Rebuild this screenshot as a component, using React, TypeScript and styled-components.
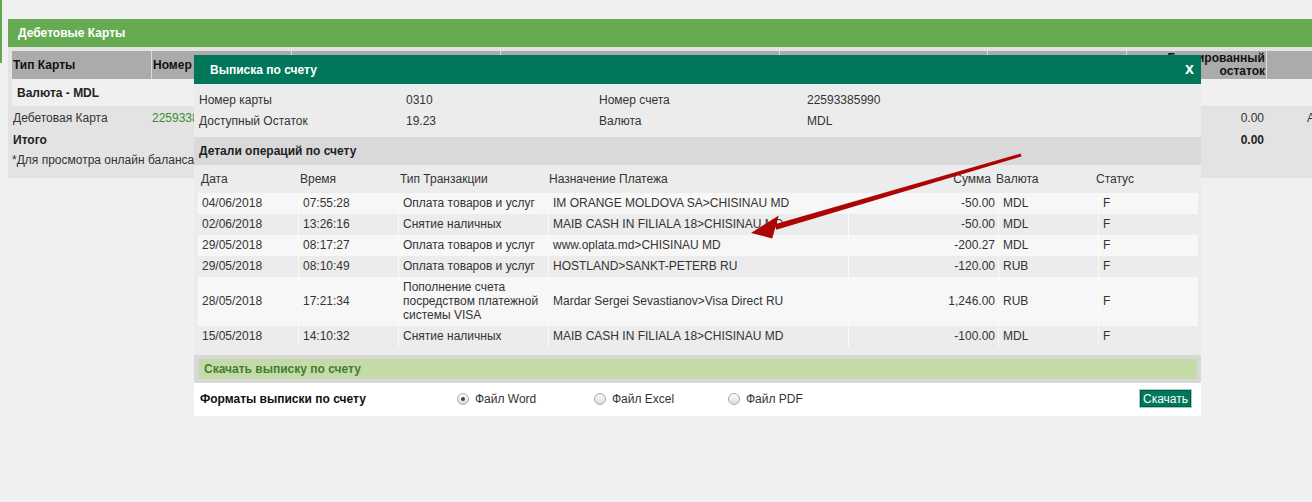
import React from "react";
import styled, { createGlobalStyle } from "styled-components";

const GlobalStyle = createGlobalStyle`
  html, body { margin: 0; padding: 0; background: #f0f0f0; }
  body {
    font-family: "Liberation Sans", Arial, sans-serif;
    font-size: 12px;
    color: #333;
  }
  * { box-sizing: border-box; }
`;

const Page = styled.div`
  position: relative;
  width: 1312px;
  height: 502px;
  overflow: hidden;
  display: flex;
  align-items: flex-start;
  background: #f0f0f0;
`;

const LeftStrip = styled.div`
  width: 2px;
  height: 63px;
  flex-shrink: 0;
  background: #63a950;
`;

const Main = styled.div`
  padding: 19px 0 0 6px;
  flex: 1;
  min-width: 0;
`;

const Panel = styled.section`
  width: 1370px;
`;

const PanelHeader = styled.div`
  height: 28px;
  background: #66aa52;
  color: #fff;
  font-weight: bold;
  line-height: 28px;
  padding-left: 10px;
`;

const PanelBody = styled.div`
  background: #e3e3e3;
  padding: 4px 0 10px 4px;
`;

const BgGrid = styled.div`
  display: grid;
  grid-template-columns: 139px 140px 209px 279px 208px 139px 140px 100px;
`;

const BgHead = styled.div<{ $right?: boolean }>`
  background: #ababab;
  height: 28px;
  display: flex;
  align-items: center;
  justify-content: ${(p) => (p.$right ? "flex-end" : "flex-start")};
  text-align: ${(p) => (p.$right ? "right" : "left")};
  padding: 0 1px;
  font-weight: bold;
  color: #111;
  line-height: 13px;
  & + & { border-left: 1px solid #dcdcdc; }
`;

const CurrencyRow = styled.div`
  grid-column: 1 / -1;
  height: 27px;
  line-height: 27px;
  padding-top: 1px;
  background: #f0f0f0;
  padding-left: 5px;
  font-weight: bold;
  color: #222;
`;

const BgCell = styled.div<{ $right?: boolean; $bold?: boolean; $green?: boolean; $pad?: number }>`
  height: ${(p) => (p.$bold ? "23px" : "22px")};
  line-height: ${(p) => (p.$bold ? "24px" : "22px")};
  padding: ${(p) => (p.$bold ? "0" : "1px")} ${(p) => (p.$right ? "2px" : "0")} 0 ${(p) => p.$pad ?? 1}px;
  text-align: ${(p) => (p.$right ? "right" : "left")};
  font-weight: ${(p) => (p.$bold ? "bold" : "normal")};
  color: ${(p) => (p.$green ? "#3d8a34" : p.$bold ? "#222" : "#333")};
  white-space: nowrap;
  overflow: hidden;
`;

const NoteRow = styled.div`
  grid-column: 1 / -1;
  height: 17px;
  line-height: 17px;
  padding-top: 1px;
  color: #333;
`;

/* ---------- Modal ---------- */

const Modal = styled.div`
  position: absolute;
  left: 194px;
  top: 55px;
  width: 1007px;
  background: #ececec;
`;

const ModalHeader = styled.div`
  height: 29px;
  background: #00765a;
  display: flex;
  align-items: center;
  justify-content: space-between;
  padding: 0 7px 0 16px;
  color: #fff;
  font-weight: bold;
`;

const Close = styled.span`
  font-size: 16px;
  font-weight: bold;
  line-height: 16px;
  margin-top: -1px;
`;

const InfoGrid = styled.div`
  display: grid;
  grid-template-columns: 207px 193px 208px 1fr;
  grid-auto-rows: 21px;
  align-items: center;
  padding: 5px 0 6px 5px;
  color: #333;
`;

const SectionTitle = styled.div`
  height: 28px;
  line-height: 28px;
  background: #d9d9d9;
  padding-left: 5px;
  font-weight: bold;
  color: #222;
`;

const OpsTable = styled.div`
  width: 1000px;
  margin-left: 4px;
  display: grid;
  grid-template-columns: 100px 100px 150px 300px 150px 100px 100px;
`;

const OpsHead = styled.div<{ $right?: boolean; $padR?: number; $shift?: number }>`
  height: 28px;
  line-height: 28px;
  padding: 0 ${(p) => p.$padR ?? 0}px 0 3px;
  text-indent: ${(p) => p.$shift ?? 0}px;
  text-align: ${(p) => (p.$right ? "right" : "left")};
  color: #333;
  white-space: nowrap;
`;

const OpsCell = styled.div<{ $alt?: boolean; $right?: boolean; $first?: boolean }>`
  background: ${(p) => (p.$alt ? "#ececec" : "#f7f7f7")};
  border-left: ${(p) => (p.$first ? "none" : "1px solid #fafafa")};
  padding: 3px 3px 4px ${(p) => (p.$first ? "4px" : "4px")};
  line-height: 14px;
  text-align: ${(p) => (p.$right ? "right" : "left")};
  display: flex;
  align-items: center;
  justify-content: ${(p) => (p.$right ? "flex-end" : "flex-start")};
  color: #333;
`;

const DownloadBar = styled.div`
  margin-top: 8px;
  background: #d8d8d8;
  padding: 4px 4px 4px 5px;
`;

const DownloadInner = styled.div`
  height: 20px;
  line-height: 20px;
  background: #c4dba8;
  padding-left: 5px;
  font-weight: bold;
  color: #3f7f34;
`;

const FormatsRow = styled.div`
  height: 33px;
  background: #fff;
  display: grid;
  grid-template-columns: 257px 137px 134px 1fr auto;
  align-items: center;
  padding: 0 9px 2px 6px;
`;

const FormatsLabel = styled.span`
  font-weight: bold;
  color: #111;
`;

const RadioOption = styled.label`
  display: flex;
  align-items: center;
  gap: 6px;
  color: #333;
`;

const RadioDot = styled.span<{ $checked?: boolean }>`
  width: 12px;
  height: 12px;
  border-radius: 50%;
  border: 1px solid #a9a9a9;
  background: linear-gradient(#fdfdfd, #dcdcdc);
  display: inline-flex;
  align-items: center;
  justify-content: center;
  &::after {
    content: "";
    width: 4px;
    height: 4px;
    border-radius: 50%;
    background: ${(p) => (p.$checked ? "#444" : "transparent")};
  }
`;

const DownloadButton = styled.button`
  height: 19px;
  width: 53px;
  padding: 0;
  background: #00765a;
  color: #fff;
  border: 1px solid #a9cbbf;
  box-shadow: inset 0 0 0 1px #005a44;
  font-family: "Liberation Sans", Arial, sans-serif;
  font-size: 12px;
  line-height: 16px;
`;

const ArrowLayer = styled.svg`
  position: absolute;
  left: 0;
  top: 0;
  pointer-events: none;
`;

type Op = {
  date: string;
  time: string;
  type: string;
  purpose: string;
  sum: string;
  cur: string;
  status: string;
};

const ops: Op[] = [
  { date: "04/06/2018", time: "07:55:28", type: "Оплата товаров и услуг", purpose: "IM ORANGE MOLDOVA SA>CHISINAU MD", sum: "-50.00", cur: "MDL", status: "F" },
  { date: "02/06/2018", time: "13:26:16", type: "Снятие наличных", purpose: "MAIB CASH IN FILIALA 18>CHISINAU MD", sum: "-50.00", cur: "MDL", status: "F" },
  { date: "29/05/2018", time: "08:17:27", type: "Оплата товаров и услуг", purpose: "www.oplata.md>CHISINAU MD", sum: "-200.27", cur: "MDL", status: "F" },
  { date: "29/05/2018", time: "08:10:49", type: "Оплата товаров и услуг", purpose: "HOSTLAND>SANKT-PETERB RU", sum: "-120.00", cur: "RUB", status: "F" },
  { date: "28/05/2018", time: "17:21:34", type: "Пополнение счета посредством платежной системы VISA", purpose: "Mardar Sergei Sevastianov>Visa Direct RU", sum: "1,246.00", cur: "RUB", status: "F" },
  { date: "15/05/2018", time: "14:10:32", type: "Снятие наличных", purpose: "MAIB CASH IN FILIALA 18>CHISINAU MD", sum: "-100.00", cur: "MDL", status: "F" },
];

export default function App() {
  return (
    <>
      <GlobalStyle />
      <Page>
        <LeftStrip />
        <Main>
          <Panel>
            <PanelHeader>Дебетовые Карты</PanelHeader>
            <PanelBody>
              <BgGrid>
                <BgHead>Тип Карты</BgHead>
                <BgHead>Номер</BgHead>
                <BgHead />
                <BgHead />
                <BgHead />
                <BgHead />
                <BgHead $right>Блокированный<br />остаток</BgHead>
                <BgHead />

                <CurrencyRow>Валюта - MDL</CurrencyRow>

                <BgCell>Дебетовая Карта</BgCell>
                <BgCell $green>22593385990</BgCell>
                <BgCell />
                <BgCell />
                <BgCell />
                <BgCell />
                <BgCell $right>0.00</BgCell>
                <BgCell $pad={41}>Активна</BgCell>

                <BgCell $bold>Итого</BgCell>
                <BgCell $bold />
                <BgCell $bold />
                <BgCell $bold />
                <BgCell $bold />
                <BgCell $bold />
                <BgCell $bold $right>0.00</BgCell>
                <BgCell $bold />

                <NoteRow>*Для просмотра онлайн баланса</NoteRow>
              </BgGrid>
            </PanelBody>
          </Panel>
        </Main>

        <Modal>
          <ModalHeader>
            <span>Выписка по счету</span>
            <Close>x</Close>
          </ModalHeader>
          <InfoGrid>
            <span>Номер карты</span>
            <span>0310</span>
            <span>Номер счета</span>
            <span>22593385990</span>
            <span>Доступный Остаток</span>
            <span>19.23</span>
            <span>Валюта</span>
            <span>MDL</span>
          </InfoGrid>
          <SectionTitle>Детали операций по счету</SectionTitle>
          <OpsTable>
            <OpsHead>Дата</OpsHead>
            <OpsHead $shift={-1}>Время</OpsHead>
            <OpsHead $shift={-1}>Тип Транзакции</OpsHead>
            <OpsHead $shift={-2}>Назначение Платежа</OpsHead>
            <OpsHead $right $padR={7}>Сумма</OpsHead>
            <OpsHead $shift={-5}>Валюта</OpsHead>
            <OpsHead $shift={-5}>Статус</OpsHead>
            {ops.map((o, i) => {
              const alt = i % 2 === 1;
              return (
                <React.Fragment key={i}>
                  <OpsCell $alt={alt} $first>{o.date}</OpsCell>
                  <OpsCell $alt={alt}>{o.time}</OpsCell>
                  <OpsCell $alt={alt}>{o.type}</OpsCell>
                  <OpsCell $alt={alt}>{o.purpose}</OpsCell>
                  <OpsCell $alt={alt} $right>{o.sum}</OpsCell>
                  <OpsCell $alt={alt}>{o.cur}</OpsCell>
                  <OpsCell $alt={alt}>{o.status}</OpsCell>
                </React.Fragment>
              );
            })}
          </OpsTable>
          <DownloadBar>
            <DownloadInner>Скачать выписку по счету</DownloadInner>
          </DownloadBar>
          <FormatsRow>
            <FormatsLabel>Форматы выписки по счету</FormatsLabel>
            <RadioOption>
              <RadioDot $checked />
              Файл Word
            </RadioOption>
            <RadioOption>
              <RadioDot />
              Файл Excel
            </RadioOption>
            <RadioOption>
              <RadioDot />
              Файл PDF
            </RadioOption>
            <DownloadButton>Скачать</DownloadButton>
          </FormatsRow>
        </Modal>

        <ArrowLayer width="1312" height="502" viewBox="0 0 1312 502">
          <polygon
            points="1021.4,156.4 1020.6,153.6 774.7,224.3 776.3,229.7"
            fill="#ad0505"
          />
          <polygon points="751,233 778.8,215.5 772.2,238.5" fill="#ad0505" />
        </ArrowLayer>
      </Page>
    </>
  );
}
